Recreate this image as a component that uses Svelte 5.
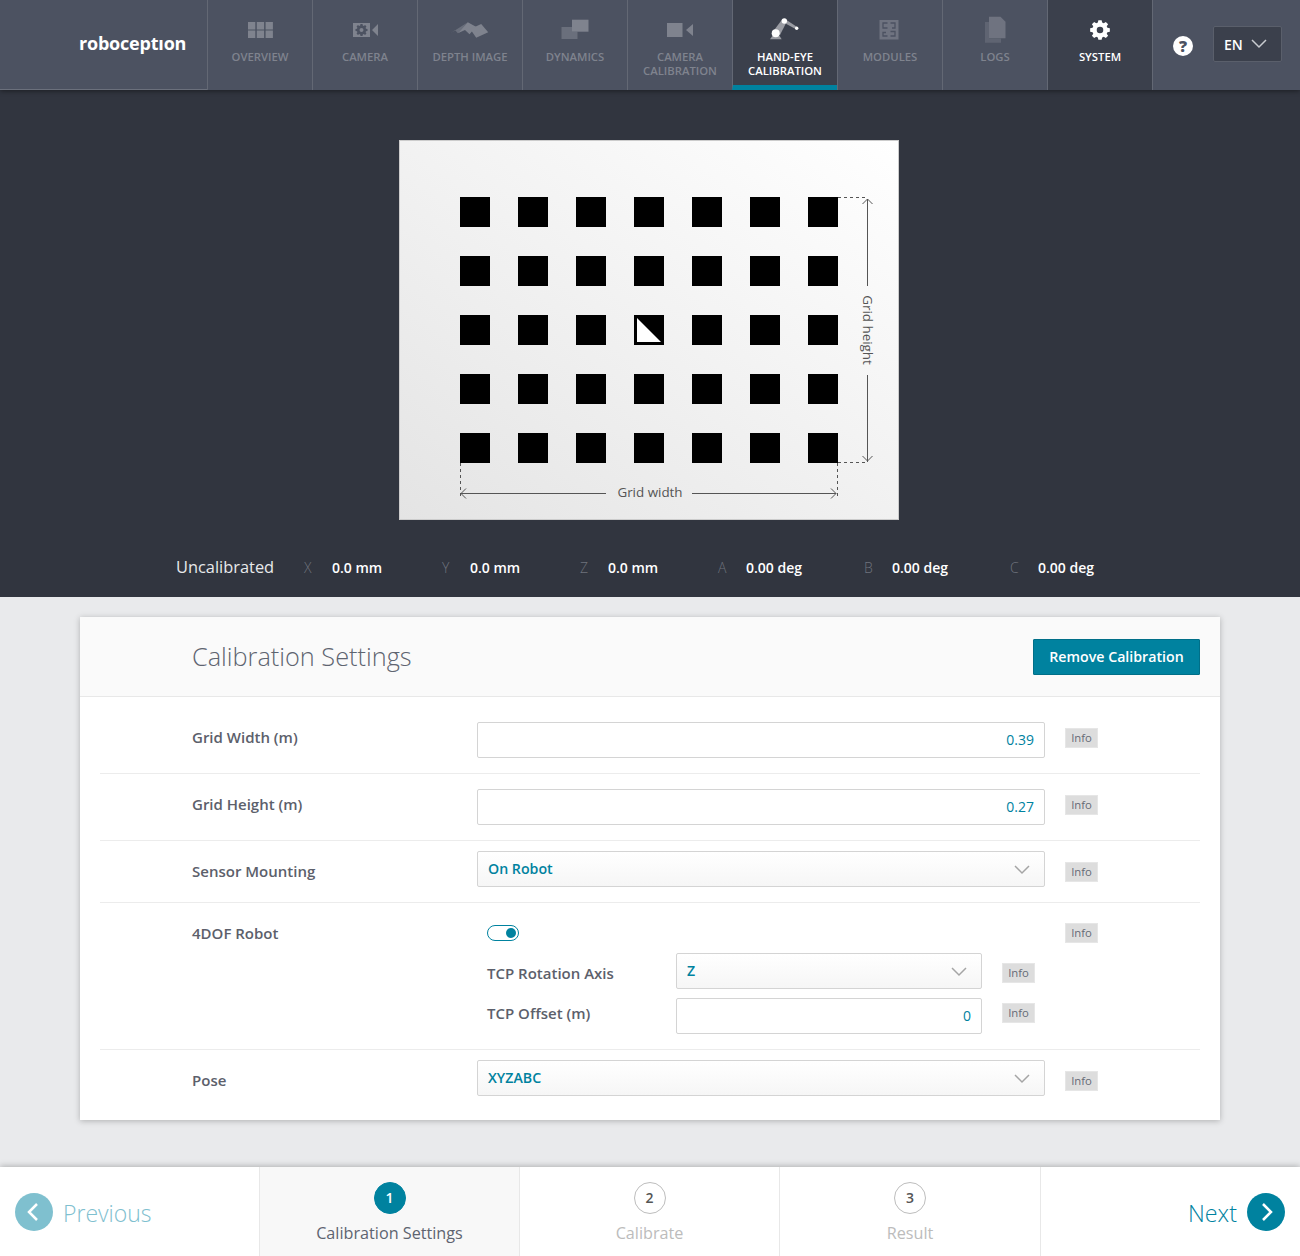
<script>
  const navItems = [
    { icon: "overview", label: "Overview" },
    { icon: "camera", label: "Camera" },
    { icon: "depth", label: "Depth Image" },
    { icon: "dynamics", label: "Dynamics" },
    { icon: "video", label: "Camera Calibration" },
    { icon: "robot", label: "Hand-Eye Calibration", active: true },
    { icon: "modules", label: "Modules" },
    { icon: "logs", label: "Logs" },
    { icon: "gear", label: "System", dark: true }
  ];
  const poseValues = [
    { axis: "X", value: "0.0 mm" },
    { axis: "Y", value: "0.0 mm" },
    { axis: "Z", value: "0.0 mm" },
    { axis: "A", value: "0.00 deg", deg: true },
    { axis: "B", value: "0.00 deg", deg: true },
    { axis: "C", value: "0.00 deg", deg: true }
  ];
  const dots = Array.from({ length: 35 }, (_, i) => i);
  const steps = [
    { n: 1, label: "Calibration Settings", active: true },
    { n: 2, label: "Calibrate" },
    { n: 3, label: "Result" }
  ];
  // same cog for the system tab and the camera tab
  const gearPath =
    "M18 5h4l.6 3 2 .8 2.500-1.700 2.800 2.800-1.700 2.500.8 2 3 .6v4l-3 .6-.8 2 1.700 2.500-2.800 2.800-2.500-1.700-2 .8-.6 3h-4l-.6-3-2-.8-2.500 1.700-2.800-2.800 1.700-2.500-.8-2-3-.6v-4l3-.6.8-2-1.700-2.500 2.800-2.800 2.500 1.700 2-.8zM20 13a4 4 0 1 0 0 8 4 4 0 0 0 0-8z";
</script>

<header class="topbar">
  <div class="logo"><span>roboceptıon</span></div>
  {#each navItems as item}
    <div class="nav-item" class:active={item.active} class:dark={item.dark}>
      <svg class="nav-icon" viewBox="0 0 40 30" width="40" height="30">
        {#if item.icon === "overview"}
          <path d="M8 7h7.300v7.500H8zM16.800 7h7.300v7.500h-7.300zM25.600 7h7.300v7.500h-7.300zM8 15.500h7.300V23H8zM16.800 15.500h7.300V23h-7.300zM25.600 15.500h7.300V23h-7.300z" />
        {:else if item.icon === "camera"}
          <path d="M8 8h17v14H8zM27 15l6-6v12z" />
          <path class="cut" fill-rule="evenodd" d={gearPath} transform="translate(16.500 15) scale(.5) translate(-20 -17)" />
        {:else if item.icon === "depth"}
          <path d="M.5 18.300L17.800 7.300 7.800 18.300 5 15z" opacity="0.6" />
          <path d="M7.800 18.300L17.800 7.300 26 11.700 19.500 19.300 15 15z" />
          <path d="M20.200 14L31.200 9 38.200 17.300 26.200 22.700z" />
        {:else if item.icon === "dynamics"}
          <path d="M6.500 12H17v4.700h5.500V24h-16z" opacity="0.6" />
          <path d="M17 4.700h16.500v12H17z" />
        {:else if item.icon === "video"}
          <path d="M7 8h15.500v14H7zM26 15l7-6v12z" />
        {:else if item.icon === "robot"}
          <path d="M5 24.300l2.500-3.600h7l2.200 3.600z" />
          <path d="M6.700 18.300L16.700 5l5 1.700L15 20z" />
          <path d="M20 4l11.700 7.700-.7 2.600L20 8.300z" />
          <circle cx="10.700" cy="18.300" r="4" class="white" />
          <circle cx="19.300" cy="6" r="2.700" class="white" />
          <circle cx="31.700" cy="13.300" r="1.700" class="white" />
        {:else if item.icon === "modules"}
          <rect class="dim" x="9.500" y="5" width="19" height="19.500" />
          <path class="puzzle" d="M17.500 8h-4.500v5h4.500M20.500 8h4.500v5h-3M17.500 21h-4.500v-3.500h3M20.500 16.500h4.500v4.500h-4.500" />
        {:else if item.icon === "logs"}
          <path class="back" d="M10 7h4v16.500h12v4.200H10z" />
          <path class="dim" d="M14 1.700h11.500l5 5v16.600H14z" />
        {:else if item.icon === "gear"}
          <path fill-rule="evenodd" d={gearPath} transform="translate(20 15) scale(.82) translate(-20 -17)" />
        {/if}
      </svg>
      <div class="nav-label">{item.label}</div>
    </div>
  {/each}
  <div class="top-tools">
    <div class="help">?</div>
    <div class="lang">
      EN
      <svg viewBox="0 0 16 10" width="16" height="10"><path d="M1 1l7 7 7-7" /></svg>
    </div>
  </div>
</header>

<section class="stage">
  <div class="target">
    <div class="dots">
      {#each dots as i}
        <div class="dot">
          {#if i === 17}
            <svg viewBox="0 0 30 30" width="30" height="30"><path d="M3 3v24h24z" fill="#fff" /></svg>
          {/if}
        </div>
      {/each}
    </div>
    <svg class="dims" viewBox="0 0 500 380" width="500" height="380">
      <g fill="none" stroke="#555" stroke-width="1">
        <path stroke-dasharray="3 3" d="M439 57.500h29M439 322.500h29M438.500 323v33M61.500 323v33" />
        <path d="M468.500 59v87M468.500 235v87M463.500 64l5-5 5 5M463.500 316l5 5 5-5" />
        <path d="M62 353.500h145M293 353.500h144M67 348.500l-5 5 5 5M432 348.500l5 5-5 5" />
      </g>
      <text x="251" y="357" text-anchor="middle">Grid width</text>
      <text transform="translate(463.500 190) rotate(90)" text-anchor="middle">Grid height</text>
    </svg>
  </div>
  <div class="status">
    <span class="state">Uncalibrated</span>
    {#each poseValues as p}
      <span class="axis">{p.axis}</span>
      <span class="axis-value" class:deg={p.deg}>{p.value}</span>
    {/each}
  </div>
</section>

<main class="content">
  <div class="card">
    <div class="card-head">
      <h2>Calibration Settings</h2>
      <button class="remove">Remove Calibration</button>
    </div>

    <div class="row row-input">
      <div class="label">Grid Width (m)</div>
      <div class="field"><input type="text" value="0.39" /></div>
      <span class="info">Info</span>
    </div>
    <div class="row row-input second">
      <div class="label">Grid Height (m)</div>
      <div class="field"><input type="text" value="0.27" /></div>
      <span class="info">Info</span>
    </div>
    <div class="row row-select">
      <div class="label">Sensor Mounting</div>
      <div class="field">
        <div class="select">On Robot
          <svg viewBox="0 0 16 10" width="16" height="10"><path d="M1 1l7 7 7-7" /></svg>
        </div>
      </div>
      <span class="info">Info</span>
    </div>
    <div class="row row-dof">
      <div class="label">4DOF Robot</div>
      <div class="dof-body">
        <div class="toggle"><span></span></div>
        <div class="sub-row axis-row">
          <div class="sub-label">TCP Rotation Axis</div>
          <div class="select">Z
            <svg viewBox="0 0 16 10" width="16" height="10"><path d="M1 1l7 7 7-7" /></svg>
          </div>
          <span class="info">Info</span>
        </div>
        <div class="sub-row offset-row">
          <div class="sub-label">TCP Offset (m)</div>
          <input type="text" value="0" />
          <span class="info">Info</span>
        </div>
      </div>
      <span class="info dof-info">Info</span>
    </div>
    <div class="row row-select last">
      <div class="label">Pose</div>
      <div class="field">
        <div class="select">XYZABC
          <svg viewBox="0 0 16 10" width="16" height="10"><path d="M1 1l7 7 7-7" /></svg>
        </div>
      </div>
      <span class="info">Info</span>
    </div>
  </div>
</main>

<footer class="wizard">
  <div class="wiz-nav prev">
    <span class="round">
      <svg viewBox="0 0 38 38" width="38" height="38"><path d="M22 11l-8 8 8 8" /></svg>
    </span>
    <span class="wiz-text">Previous</span>
  </div>
  {#each steps as s}
    <div class="step" class:current={s.active}>
      <span class="num">{s.n}</span>
      <span class="step-label">{s.label}</span>
    </div>
  {/each}
  <div class="wiz-nav next">
    <span class="wiz-text">Next</span>
    <span class="round">
      <svg viewBox="0 0 38 38" width="38" height="38"><path d="M16 11l8 8-8 8" /></svg>
    </span>
  </div>
</footer>

<style>
  :global(body) {
    margin: 0;
    font-family: "Open Sans", "Noto Sans", sans-serif;
    background: #e9eaec;
  }
  .topbar {
    display: flex;
    height: 90px;
    background: #4c5261;
    position: relative;
    box-shadow: 0 1px 5px rgba(0, 0, 0, 0.45);
  }
  .logo {
    width: 208px;
    box-sizing: border-box;
    padding: 30px 0 0 79px;
    border-bottom: 1px solid #6b707c;
    height: 90px;
    color: #fff;
    font-size: 18px;
    font-weight: 700;
    line-height: 26px;
    letter-spacing: -0.2px;
  }
  .nav-item {
    width: 105px;
    box-sizing: border-box;
    height: 90px;
    border-left: 1px solid #636874;
    padding-top: 15px;
    text-align: center;
    color: #7f838e;
    fill: #7f838e;
    flex-shrink: 0;
  }
  .nav-icon {
    display: block;
    margin: 0 auto;
  }
  .nav-icon .cut {
    fill: #4c5261;
  }
  .nav-icon .dim {
    fill: #6f7380;
  }
  .nav-icon .back {
    fill: #5f6472;
  }
  .nav-icon .puzzle {
    fill: none;
    stroke: #4c5261;
    stroke-width: 1.300;
  }
  .nav-label {
    font-size: 11.300px;
    line-height: 14px;
    font-weight: 600;
    text-transform: uppercase;
    margin-top: 5px;
    padding: 0 4px;
  }
  .nav-item.active {
    background: #3b404c;
    color: #fff;
    fill: #9a9ca3;
    border-bottom: 5px solid #00829f;
  }
  .nav-item.active .white {
    fill: #fff;
  }
  .nav-item.dark {
    background: #3b404c;
    color: #fff;
    fill: #fff;
  }
  .top-tools {
    flex: 1;
    display: flex;
    align-items: center;
    box-sizing: border-box;
    height: 90px;
    border-left: 1px solid #636874;
    padding: 0 18px 0 20px;
    gap: 20px;
  }
  .help {
    width: 20px;
    height: 20px;
    border-radius: 50%;
    background: #fff;
    color: #4c5261;
    font-size: 16px;
    font-weight: 800;
    line-height: 20px;
    text-align: center;
    margin-top: 2px;
  }
  .lang {
    box-sizing: border-box;
    width: 69px;
    height: 36px;
    margin-top: -2px;
    background: #3b404c;
    border: 1px solid #5a5f6b;
    border-radius: 2px;
    color: #fff;
    font-size: 14px;
    font-weight: 600;
    display: flex;
    align-items: center;
    justify-content: space-between;
    padding: 0 14px 0 10px;
  }
  .lang path {
    fill: none;
    stroke: #c9cbd0;
    stroke-width: 1.5;
  }
  .stage {
    height: 507px;
    background: #31353f;
    box-sizing: border-box;
    padding-top: 50px;
  }
  .target {
    position: relative;
    box-sizing: border-box;
    width: 500px;
    height: 380px;
    margin-left: 399px;
    padding: 57px 0 0 61px;
    border: 1px solid #ccc;
    background: linear-gradient(215deg, #fff 0%, #e4e4e4 100%);
  }
  .dots {
    display: grid;
    grid-template-columns: repeat(7, 30px);
    grid-auto-rows: 30px;
    gap: 29px 28px;
    margin: -1px 0 0 -1px;
  }
  .dot {
    background: #000;
    height: 30px;
  }
  .dot svg {
    display: block;
  }
  .dims {
    position: absolute;
    left: -1px;
    top: -1px;
  }
  .dims text {
    font-family: "Open Sans", sans-serif;
    font-size: 13.400px;
    fill: #555;
  }
  .status {
    display: flex;
    align-items: baseline;
    padding: 35px 0 0 176px;
    color: #fff;
    white-space: nowrap;
  }
  .state {
    font-size: 16.400px;
    width: 128px;
    color: #e8e9eb;
  }
  .axis {
    width: 28px;
    font-size: 14px;
    font-weight: 300;
    color: #6f737d;
  }
  .axis-value {
    font-size: 14px;
    font-weight: 600;
    width: 110px;
  }
  .axis-value.deg {
    width: 118px;
  }
  .content {
    height: 570px;
    box-sizing: border-box;
    padding: 20px 80px 0;
  }
  .card {
    background: #fff;
    height: 503px;
    box-shadow: 0 1px 6px rgba(0, 0, 0, 0.25);
  }
  .card-head {
    height: 80px;
    box-sizing: border-box;
    background: #fafafa;
    border-bottom: 1px solid #e8e8e8;
    display: flex;
    align-items: center;
    justify-content: space-between;
    padding: 0 20px 0 112px;
  }
  h2 {
    margin: 0 0 2px;
    font-size: 25.300px;
    font-weight: 300;
    color: #5e6470;
  }
  .remove {
    width: 167px;
    height: 36px;
    background: #00829f;
    border: 1px solid #006f88;
    border-radius: 1px;
    color: #fff;
    font-family: inherit;
    font-size: 14.200px;
    font-weight: 600;
  }
  .row {
    display: flex;
    margin: 0 20px;
    padding-left: 92px;
    border-bottom: 1px solid #ececec;
    box-sizing: border-box;
    position: relative;
  }
  .row-input {
    height: 77px;
    padding-top: 25px;
  }
  .row-input.second {
    height: 67px;
    padding-top: 15px;
  }
  .row-select {
    height: 62px;
    padding-top: 10px;
  }
  .row-dof {
    height: 147px;
    padding-top: 10px;
  }
  .row.last {
    border-bottom: none;
  }
  .label,
  .sub-label {
    font-size: 15px;
    font-weight: 600;
    color: #5c606b;
  }
  .label {
    width: 285px;
    flex-shrink: 0;
    line-height: 20px;
    margin-top: 5px;
  }
  .row-select .label {
    margin-top: 10px;
  }
  .row-dof .label {
    margin-top: 10px;
  }
  .field {
    width: 568px;
    flex-shrink: 0;
  }
  input {
    display: block;
    box-sizing: border-box;
    width: 100%;
    height: 36px;
    border: 1px solid #d4d4d4;
    border-radius: 2px;
    padding: 0 10px 2px;
    text-align: right;
    font-family: inherit;
    font-size: 14px;
    color: #00829f;
    background: #fff;
    outline: none;
  }
  .select {
    box-sizing: border-box;
    height: 36px;
    border: 1px solid #d4d4d4;
    border-radius: 2px;
    background: linear-gradient(#fff, #f6f6f6);
    padding: 0 14px 1px 10px;
    display: flex;
    align-items: center;
    justify-content: space-between;
    font-size: 14.200px;
    font-weight: 600;
    color: #00829f;
  }
  .select svg {
    margin-top: 2px;
  }
  .select path {
    fill: none;
    stroke: #a5a5a5;
    stroke-width: 1.5;
  }
  .info {
    background: #ddd;
    color: #666b76;
    font-size: 11.300px;
    line-height: 18px;
    height: 20px;
    box-sizing: border-box;
    width: 33px;
    text-align: center;
    flex-shrink: 0;
    border: 1px solid #e6e6e6;
  }
  .row > .info {
    margin: 6px 0 0 20px;
  }
  .row-select > .info {
    margin-top: 11px;
  }
  .row > .dof-info {
    position: absolute;
    left: 965px;
    top: 20px;
    margin: 0;
  }
  .dof-body {
    padding: 12px 0 0 10px;
    width: 505px;
  }
  .toggle {
    box-sizing: border-box;
    width: 32px;
    height: 16px;
    border: 1.500px solid #00829f;
    border-radius: 8px;
    display: flex;
    justify-content: flex-end;
    align-items: center;
    padding-right: 2px;
  }
  .toggle span {
    width: 10px;
    height: 10px;
    border-radius: 50%;
    background: #00829f;
  }
  .sub-row {
    display: flex;
    margin-top: 9px;
  }
  .axis-row {
    margin-top: 12px;
  }
  .sub-label {
    width: 189px;
    flex-shrink: 0;
    margin-top: 10px;
    line-height: 20px;
  }
  .offset-row .sub-label {
    margin-top: 5px;
  }
  .sub-row .select,
  .sub-row input {
    width: 306px;
    flex-shrink: 0;
  }
  .sub-row .info {
    margin: 10px 0 0 20px;
  }
  .sub-row input + .info {
    margin-top: 5px;
  }
  .wizard {
    display: flex;
    height: 89px;
    background: #fff;
    box-shadow: 0 -1px 6px rgba(0, 0, 0, 0.25);
    position: relative;
  }
  .wiz-nav {
    box-sizing: border-box;
    width: 259px;
    display: flex;
    align-items: center;
    gap: 10px;
    font-size: 23.300px;
    font-weight: 300;
    color: #00829f;
  }
  .wiz-text {
    position: relative;
    top: 1px;
  }
  .wiz-nav.prev {
    padding-left: 15px;
    color: #7fc0cf;
    font-size: 23px;
  }
  .wiz-nav.prev .round {
    background: #7fc0cf;
  }
  .wiz-nav.next {
    flex: 1;
    justify-content: flex-end;
    padding-right: 15px;
  }
  .round {
    width: 38px;
    height: 38px;
    border-radius: 50%;
    background: #00829f;
    display: block;
  }
  .round svg {
    display: block;
  }
  .round path {
    fill: none;
    stroke: #fff;
    stroke-width: 2.500;
  }
  .step {
    box-sizing: border-box;
    width: 260px;
    border-left: 1px solid #e8e8e8;
    display: flex;
    flex-direction: column;
    align-items: center;
    padding-top: 15px;
  }
  .step:nth-of-type(4) {
    width: 262px;
    border-right: 1px solid #e8e8e8;
  }
  .step.current {
    background: #f8f8f8;
  }
  .num {
    box-sizing: border-box;
    width: 32px;
    height: 32px;
    border: 1px solid #bdbdbd;
    border-radius: 50%;
    background: #fff;
    color: #555;
    text-align: center;
    font-size: 14px;
    font-weight: 600;
    line-height: 30px;
  }
  .step.current .num {
    background: #00829f;
    border-color: #00829f;
    color: #fff;
  }
  .step-label {
    margin-top: 8px;
    font-size: 16.200px;
    color: #bcbcbc;
    line-height: 22px;
  }
  .step.current .step-label {
    color: #5e6470;
  }
</style>
